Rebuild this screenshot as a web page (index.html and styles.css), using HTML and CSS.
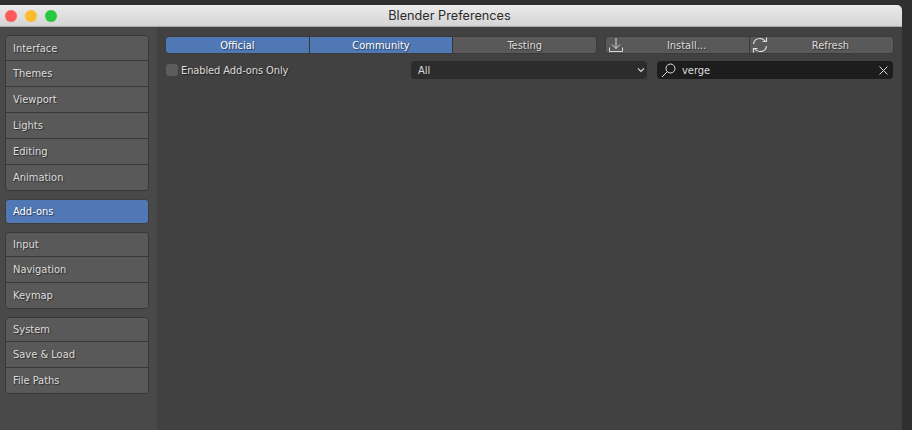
FILE: index.html
```html
<!DOCTYPE html>
<html lang="en">
<head>
<meta charset="utf-8">
<title>Blender Preferences</title>
<link rel="stylesheet" href="styles.css">
</head>
<body>
<div class="window">
  <header class="titlebar">
    <div class="lights">
      <span class="light red"></span>
      <span class="light yellow"></span>
      <span class="light green"></span>
    </div>
    <div class="title">Blender Preferences</div>
  </header>
  <div class="content">
    <nav class="sidebar">
      <div class="group group-a">
        <div class="item">Interface</div>
        <div class="item">Themes</div>
        <div class="item">Viewport</div>
        <div class="item">Lights</div>
        <div class="item">Editing</div>
        <div class="item">Animation</div>
      </div>
      <div class="group group-active">
        <div class="item active">Add-ons</div>
      </div>
      <div class="group group-b">
        <div class="item">Input</div>
        <div class="item">Navigation</div>
        <div class="item">Keymap</div>
      </div>
      <div class="group group-b">
        <div class="item">System</div>
        <div class="item">Save &amp; Load</div>
        <div class="item">File Paths</div>
      </div>
    </nav>
    <main class="main">
      <div class="row row-top">
        <div class="btn-group tabs">
          <div class="btn on">Official</div>
          <div class="btn on">Community</div>
          <div class="btn">Testing</div>
        </div>
        <div class="btn-group actions">
          <div class="btn with-icon">
            <svg class="icon" width="16" height="16" viewBox="0 0 16 16" fill="none" stroke="#d8d8d8" stroke-width="1">
              <path d="M8 1V11.500M4 7.500 8 11.500l4-4M1.500 10.500v4h13v-4"/>
            </svg>
            <span>Install...</span>
          </div>
          <div class="btn with-icon">
            <svg class="icon" width="16" height="16" viewBox="0 0 16 16" fill="none" stroke="#dedede" stroke-width="1.200">
              <path d="M1.500 7C2 3.500 4.800 1.500 8 1.500c2 0 3.800.8 5 2.500M14.500 .5v4H10.500M14.500 9c-.5 3.500-3.300 5.500-6.500 5.500-2 0-3.800-.8-5-2.500M1.500 15.500v-4H5.500"/>
            </svg>
            <span>Refresh</span>
          </div>
        </div>
      </div>
      <div class="row row-filter">
        <label class="check"><span class="box"></span>Enabled Add-ons Only</label>
        <div class="field select">
          <span>All</span>
          <svg width="8" height="6" viewBox="0 0 8 6" fill="none" stroke="#d0d0d0" stroke-width="1.200">
            <path d="M1 1.500 4 4.500 7 1.500"/>
          </svg>
        </div>
        <div class="field search">
          <svg width="15" height="15" viewBox="0 0 15 15" fill="none" stroke="#dcdcdc" stroke-width="1">
            <circle cx="9.500" cy="5.500" r="4.500"/>
            <path d="M6.300 8.700 1 14"/>
          </svg>
          <span class="query">verge</span>
          <svg width="9" height="9" viewBox="0 0 9 9" fill="none" stroke="#dcdcdc" stroke-width="1">
            <path d="M.5 .5l8 8M8.500 .5l-8 8"/>
          </svg>
        </div>
      </div>
    </main>
  </div>
</div>
</body>
</html>
```
FILE: styles.css
```css
* { box-sizing: border-box; }
html, body { margin: 0; height: 100%; }
body {
  background: #2f2f2f;
  overflow: hidden;
  padding: 5px 10px 0 0;
  font-family: "DejaVu Sans", sans-serif;
  font-stretch: condensed;
  font-size: 11px;
  color: #dcdcdc;
}
.window {
  height: 425px;
  display: flex;
  flex-direction: column;
  border-top-right-radius: 5px;
  overflow: hidden;
}
.titlebar {
  height: 22px;
  flex: none;
  display: flex;
  align-items: center;
  position: relative;
  background: linear-gradient(#ebebeb, #d4d4d4);
  border-bottom: 1px solid #a9a9a9;
}
.lights {
  position: absolute;
  left: 5px;
  top: 5px;
  display: flex;
  gap: 8px;
}
.light { width: 12px; height: 12px; border-radius: 50%; }
.red { background: #fc5b57; }
.yellow { background: #fdbc2e; }
.green { background: #27c93f; }
.title {
  flex: 1;
  text-align: center;
  font-family: "Inter", sans-serif;
  font-stretch: normal;
  font-size: 12.700px;
  color: #2b2b2b;
  padding-right: 3px;
}
.content { flex: 1; display: flex; min-height: 0; }
.sidebar {
  width: 157px;
  flex: none;
  background: #494949;
  padding: 8px 8px 0 5px;
  display: flex;
  flex-direction: column;
}
.group {
  border: 1px solid #373737;
  border-radius: 4px;
  overflow: hidden;
  margin-bottom: 8px;
}
.item {
  height: 26px;
  padding-left: 7px;
  display: flex;
  align-items: center;
  background: #595959;
  border-top: 1px solid #373737;
  text-shadow: 1px 1px 1px rgba(0, 0, 0, 0.5);
}
.item:first-child { border-top: 0; height: 24px; }
.group-b .item:first-child { height: 23px; }
.item.active {
  background: #5078b5;
  height: 23px;
  color: #fff;
}
.group-a { height: 156px; }
.group-b { height: 77px; }
.group-active { height: 25px; border-color: #3d3d3d; }
.main {
  flex: 1;
  background: #414141;
  padding: 9px 8px 0 8px;
}
.row { display: flex; height: 18px; }
.row-top { gap: 8px; }
.row-filter { margin-top: 7px; gap: 10px; }
.btn-group {
  display: flex;
  width: 289px;
  border: 1px solid #3b3b3b;
  border-radius: 4px;
  overflow: hidden;
}
.tabs { width: 432px; }
.btn {
  flex: 1;
  display: flex;
  align-items: center;
  justify-content: center;
  background: #595959;
  border-left: 1px solid #373737;
  text-shadow: 1px 1px 1px rgba(0, 0, 0, 0.5);
  position: relative;
}
.btn:first-child { border-left: 0; }
.btn.on { background: #5078b5; color: #fff; }
.with-icon span { padding-left: 18px; }
.icon { position: absolute; left: 2px; top: 0; }
.check {
  width: 236px;
  display: flex;
  align-items: center;
  gap: 3px;
  letter-spacing: -0.1px;
  text-shadow: 1px 1px 1px rgba(0, 0, 0, 0.5);
}
.box {
  width: 12px;
  height: 12px;
  margin-left: 1px;
  border-radius: 3px;
  background: #5c5c5c;
}
.field {
  width: 236px;
  display: flex;
  align-items: center;
  border-radius: 4px;
}
.select {
  background: #2c2c2c;
  justify-content: space-between;
  padding: 0 2px 0 7px;
}
.search {
  background: #1d1d1d;
  padding: 0 5px 0 4px;
}
.query { flex: 1; padding-left: 6px; }
```
